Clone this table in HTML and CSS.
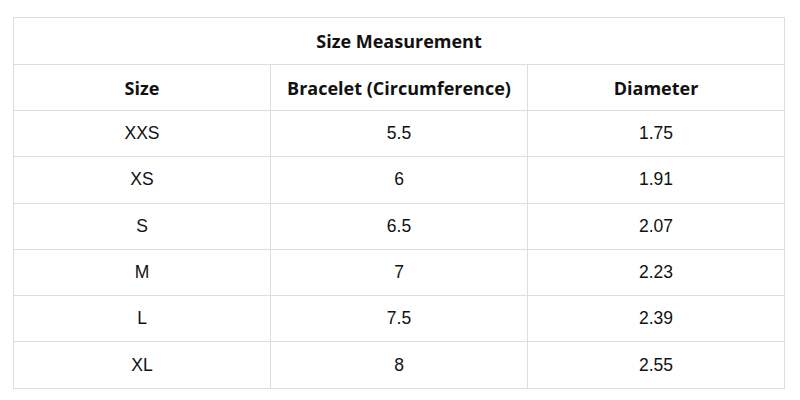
FILE: index.html
```html
<!DOCTYPE html>
<html>
<head>
<meta charset="utf-8">
<link rel="stylesheet" href="styles.css">
</head>
<body>
<div class="wrap">
<table class="size-table">
  <tr class="title-row"><th colspan="3">Size Measurement</th></tr>
  <tr class="head-row"><th>Size</th><th>Bracelet (Circumference)</th><th>Diameter</th></tr>
  <tr><td>XXS</td><td>5.5</td><td>1.75</td></tr>
  <tr><td>XS</td><td>6</td><td>1.91</td></tr>
  <tr><td>S</td><td>6.5</td><td>2.07</td></tr>
  <tr><td>M</td><td>7</td><td>2.23</td></tr>
  <tr><td>L</td><td>7.5</td><td>2.39</td></tr>
  <tr><td>XL</td><td>8</td><td>2.55</td></tr>
</table>
</div>
</body>
</html>
```
FILE: styles.css
```css
html, body {
  margin: 0;
  padding: 0;
  background: #ffffff;
}
.wrap {
  padding: 17px 0 0 13px;
}
.size-table {
  width: 772px;
  border-collapse: collapse;
  table-layout: fixed;
  color: #111;
}
.size-table th,
.size-table td {
  border: 1px solid #dedede;
  text-align: center;
  vertical-align: middle;
  padding: 0;
  width: 33.33%;
}
.size-table th {
  font-family: "Open Sans", sans-serif;
  font-weight: 700;
  font-size: 18px;
}
.size-table td {
  font-family: "Liberation Sans", Arial, sans-serif;
  font-size: 17.5px;
}
.title-row th { height: 46px; }
.head-row th { height: 45px; }
.size-table td { height: 45.3px; }
```
